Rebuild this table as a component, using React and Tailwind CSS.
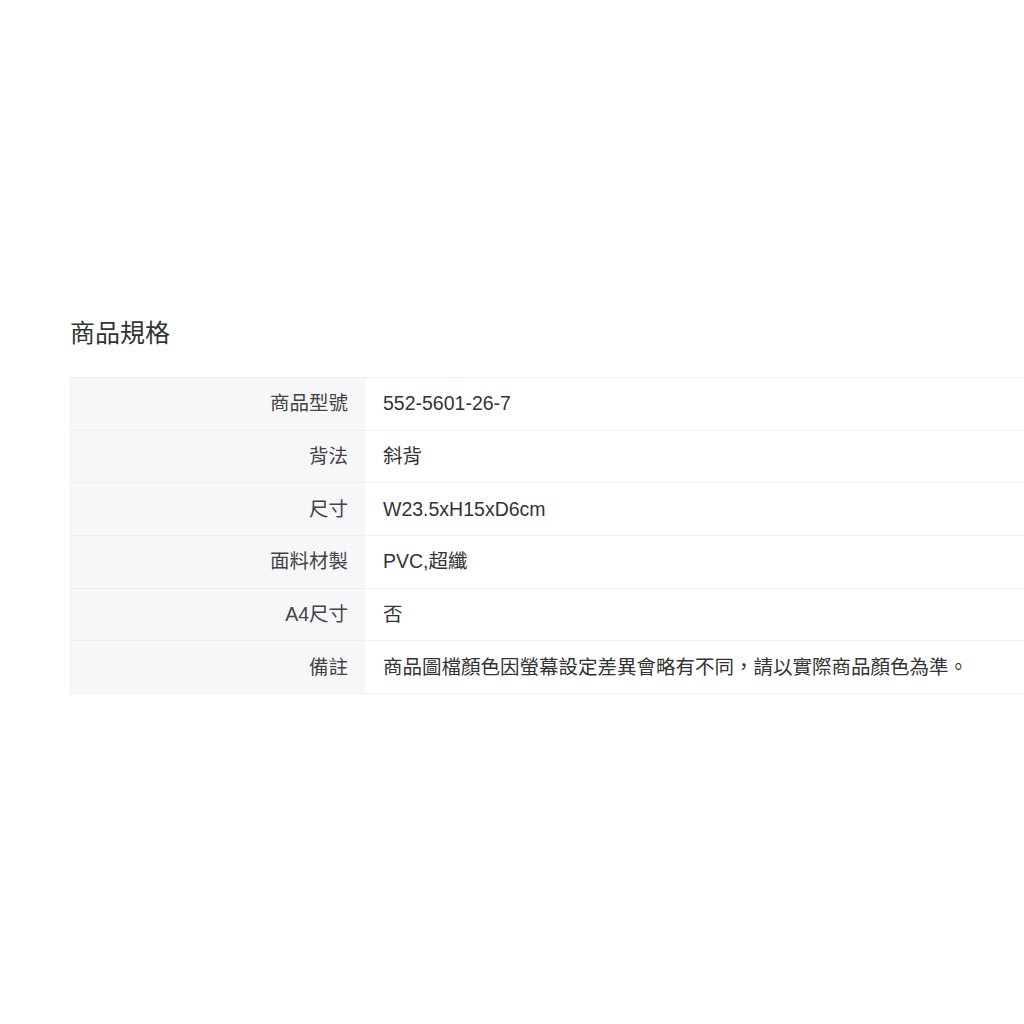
import React from 'react';

const specs = [
  { label: '商品型號', value: '552-5601-26-7' },
  { label: '背法', value: '斜背' },
  { label: '尺寸', value: 'W23.5xH15xD6cm' },
  { label: '面料材製', value: 'PVC,超纖' },
  { label: 'A4尺寸', value: '否' },
  { label: '備註', value: '商品圖檔顏色因螢幕設定差異會略有不同，請以實際商品顏色為準。' },
];

export default function App() {
  return (
    <div
      className="w-[1024px] h-[1024px] bg-white overflow-hidden text-[#333]"
      style={{ fontFamily: '"Liberation Sans", "Noto Sans CJK TC", sans-serif' }}
    >
      <div className="pt-[316px] pl-[70px]">
        {/* ── Title ── */}
        <h2 className="text-[25px] leading-[34px] text-[#333] font-normal">商品規格</h2>

        {/* ── Spec table ── */}
        <div className="mt-[27px] border-t border-[#eceef1]">
          {specs.map((row) => (
            <div key={row.label} className="flex h-[52.7px] border-b border-[#eceef1]">
              <div className="w-[295px] shrink-0 bg-[#f6f7f9] border-l border-[#eceef1] flex items-center justify-end pr-[17px] text-[19.5px] text-[#444]">
                {row.label}
              </div>
              <div className="flex-1 flex items-center pl-[18px] text-[19.5px] text-[#333] whitespace-nowrap">
                {row.value}
              </div>
            </div>
          ))}
        </div>
      </div>
    </div>
  );
}
